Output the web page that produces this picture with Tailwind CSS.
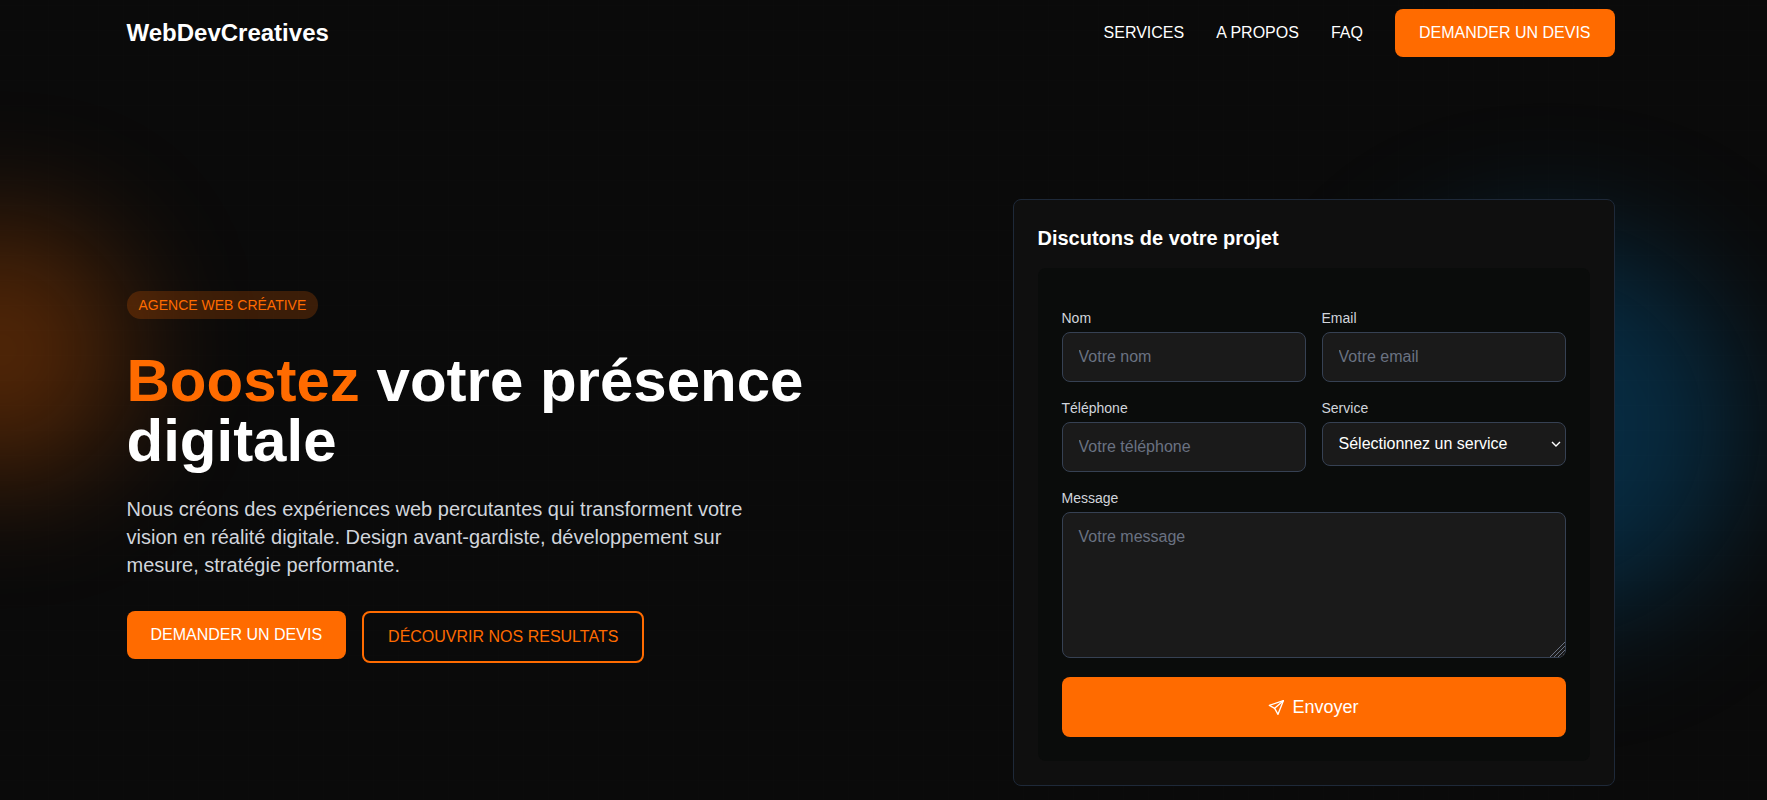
<!DOCTYPE html>
<html lang="fr">
<head>
  <meta charset="UTF-8" />
  <meta name="viewport" content="width=device-width, initial-scale=1.0"/>
  <title>WebDevCreatives</title>
  <script src="https://cdn.jsdelivr.net/npm/@tailwindcss/browser@4"></script>
</head>
<body class="relative min-h-screen overflow-x-hidden bg-[#0a0a0a] text-white font-['Liberation_Sans',Arial,sans-serif]">

  <!-- Background glows and faint grid -->
  <div class="pointer-events-none absolute inset-0 overflow-hidden" aria-hidden="true">
    <div class="absolute top-[222px] -left-[128px] size-64 rounded-full bg-[#ff6b00]/30 blur-[64px]"></div>
    <div class="absolute top-[236px] right-[25px] size-96 rounded-full bg-[#0077c0]/30 blur-[64px]"></div>
    <div class="absolute inset-0 bg-[linear-gradient(rgba(255,255,255,0.004)_1px,transparent_1px),linear-gradient(90deg,rgba(255,255,255,0.004)_1px,transparent_1px)] bg-[size:25px_25px] bg-[position:23px_5px]"></div>
  </div>

  <div class="relative pr-[26px]">
    <!-- Navigation -->
    <header class="mx-auto flex max-w-[1536px] items-center justify-between px-6 pt-[9px]">
      <a href="#" class="text-2xl font-bold">WebDevCreatives</a>
      <nav class="flex items-center gap-8">
        <a href="#services" class="hover:text-[#ff6b00]">SERVICES</a>
        <a href="#about" class="hover:text-[#ff6b00]">A PROPOS</a>
        <a href="#faq" class="hover:text-[#ff6b00]">FAQ</a>
        <a href="#contact" class="rounded-lg bg-[#ff6b00] px-6 py-3 hover:bg-orange-600">DEMANDER UN DEVIS</a>
      </nav>
    </header>

    <!-- Hero -->
    <main class="mx-auto flex max-w-[1536px] items-center justify-between gap-12 px-6 pt-[142px] pb-3">
      <section class="flex max-w-[720px] flex-col items-start pb-8">
        <span class="mb-8 rounded-full bg-[#ff6b00]/20 px-3 py-1 text-sm text-[#ff6b00]">AGENCE WEB CRÉATIVE</span>
        <h1 class="mb-6 text-6xl font-bold"><span class="text-[#ff6b00]">Boostez</span> votre présence digitale</h1>
        <p class="mb-8 max-w-2xl text-xl text-gray-300">Nous créons des expériences web percutantes qui transforment votre vision en réalité digitale. Design avant-gardiste, développement sur mesure, stratégie performante.</p>
        <div class="flex items-start gap-4">
          <a href="#contact" class="rounded-lg bg-[#ff6b00] px-6 py-3 hover:bg-orange-600">DEMANDER UN DEVIS</a>
          <a href="#results" class="rounded-lg border-2 border-[#ff6b00] px-6 py-3 text-[#ff6b00] hover:bg-[#ff6b00]/10">DÉCOUVRIR NOS RESULTATS</a>
        </div>
      </section>

      <section id="contact" class="w-[602px] shrink-0 rounded-lg border border-gray-800 bg-[#0f0f0f] p-6">
        <h2 class="mb-4 text-xl font-bold">Discutons de votre projet</h2>
        <form class="rounded-lg bg-[#0a0c0b] px-6 pt-10 pb-6">
          <div class="grid grid-cols-2 items-start gap-4">
            <div>
              <label for="nom" class="mb-1 block text-sm text-gray-300">Nom</label>
              <input type="text" id="nom" name="nom" placeholder="Votre nom"
                     class="block h-[50px] w-full rounded-lg border border-gray-700 bg-[#1a1a1a] px-4 placeholder:text-gray-500"/>
            </div>
            <div>
              <label for="email" class="mb-1 block text-sm text-gray-300">Email</label>
              <input type="email" id="email" name="email" placeholder="Votre email"
                     class="block h-[50px] w-full rounded-lg border border-gray-700 bg-[#1a1a1a] px-4 placeholder:text-gray-500"/>
            </div>
            <div>
              <label for="telephone" class="mb-1 block text-sm text-gray-300">Téléphone</label>
              <input type="tel" id="telephone" name="telephone" placeholder="Votre téléphone"
                     class="block h-[50px] w-full rounded-lg border border-gray-700 bg-[#1a1a1a] px-4 placeholder:text-gray-500"/>
            </div>
            <div>
              <label for="service" class="mb-1 block text-sm text-gray-300">Service</label>
              <div class="relative">
                <select id="service" name="service"
                        class="block h-11 w-full appearance-none rounded-lg border border-gray-700 bg-[#1a1a1a] px-4">
                  <option>Sélectionnez un service</option>
                  <option>Site vitrine</option>
                  <option>E-commerce</option>
                </select>
                <svg class="pointer-events-none absolute top-[18px] right-[5px] h-2 w-2.5" viewBox="0 0 10 8" fill="none" stroke="currentColor" stroke-width="1.4" aria-hidden="true">
                  <path d="M1 2l4 4 4-4"/>
                </svg>
              </div>
            </div>
          </div>
          <div class="mt-4">
            <label for="message" class="mb-1 block text-sm text-gray-300">Message</label>
            <div class="relative">
              <textarea id="message" name="message" rows="5" placeholder="Votre message"
                        class="block h-[146px] w-full rounded-lg border border-gray-700 bg-[#1a1a1a] px-4 py-3 placeholder:text-gray-500"></textarea>
              <!-- Resize grip -->
              <svg class="pointer-events-none absolute right-px bottom-px size-[15px] rounded-br-md bg-[#1a1a1a] text-gray-500" viewBox="0 0 15 15" fill="none" stroke="currentColor" aria-hidden="true">
                <path d="M0 15 15 0M4 15 15 4M8 15l7-7M12 15l3-3"/>
              </svg>
            </div>
          </div>
          <button type="submit" class="mt-[19px] flex h-[60px] w-full items-center justify-center gap-2 rounded-lg bg-[#ff6b00] text-lg hover:bg-orange-600">
            <svg class="size-4" viewBox="0 0 24 24" fill="none" stroke="currentColor" stroke-width="2" stroke-linecap="round" stroke-linejoin="round" aria-hidden="true">
              <path d="M23 2.500 2 9.500 10 14 15 23z"/>
              <path d="M23 2.500 10 14"/>
            </svg>
            Envoyer
          </button>
        </form>
      </section>
    </main>
  </div>
</body>
</html>
